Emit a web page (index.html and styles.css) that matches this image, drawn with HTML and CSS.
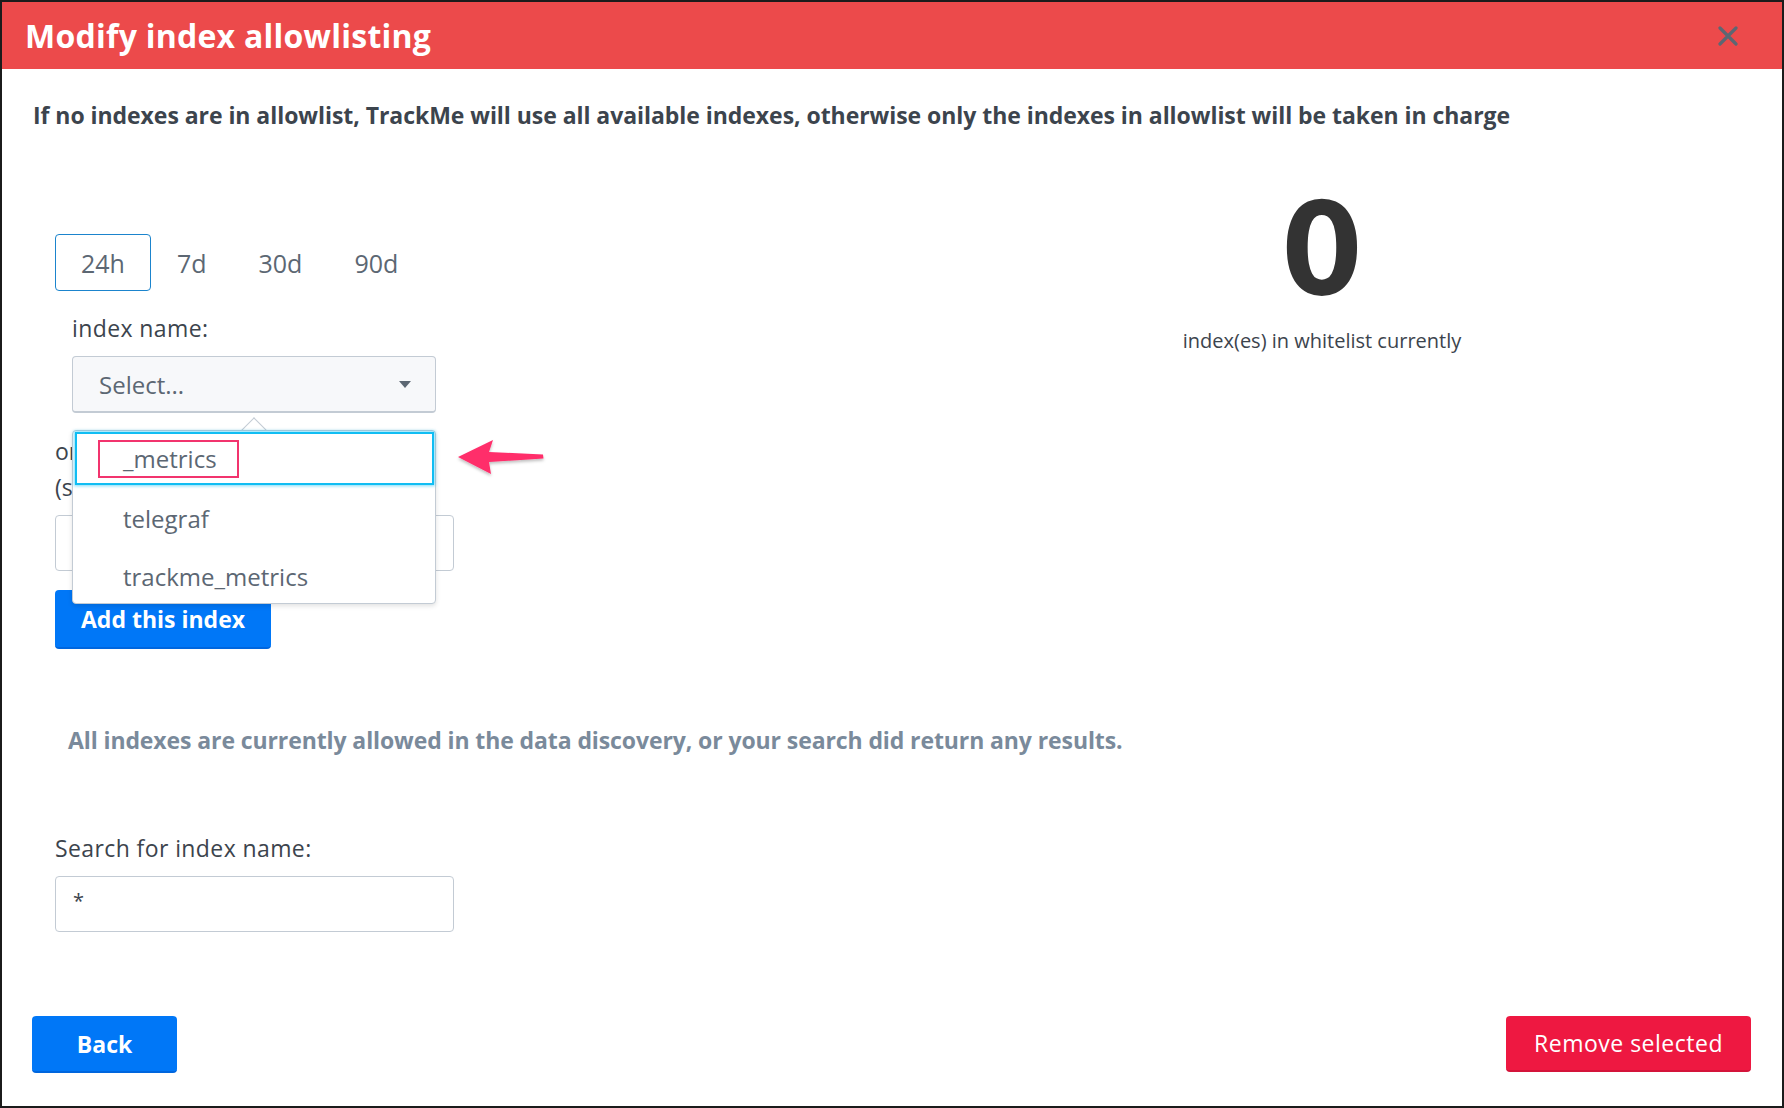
FILE: index.html
```html
<!DOCTYPE html>
<html lang="en">
<head>
<meta charset="utf-8">
<title>Modify index allowlisting</title>
<link rel="stylesheet" href="styles.css">
</head>
<body>
<div class="modal">
  <div class="modal-header">
    <h1 class="title">Modify index allowlisting</h1>
    <button class="close" aria-label="Close">
      <svg width="20" height="20" viewBox="0 0 20 20"><path d="M2 2 L18 18 M18 2 L2 18" stroke="#5C6773" stroke-width="3.2" stroke-linecap="round"/></svg>
    </button>
  </div>
  <div class="modal-body">
    <p class="intro">If no indexes are in allowlist, TrackMe will use all available indexes, otherwise only the indexes in allowlist will be taken in charge</p>
    <div class="columns">
      <div class="col-left">
        <div class="tabs">
          <span class="tab active">24h</span>
          <span class="tab">7d</span>
          <span class="tab">30d</span>
          <span class="tab">90d</span>
        </div>
        <div class="field-indent">
          <div class="label">index name:</div>
          <div class="select-wrap">
            <div class="select"><span>Select...</span><span class="caret"></span></div>
            <div class="popover">
              <div class="popover-arrow"></div>
              <ul class="menu">
                <li class="menu-item focused"><span class="annot-box">_metrics</span></li>
                <li class="menu-item">telegraf</li>
                <li class="menu-item">trackme_metrics</li>
              </ul>
            </div>
          </div>
        </div>
        <div class="manual-label">or enter an index name manually<br>(supports wildcards):</div>
        <div class="text-input"></div>
        <button class="btn btn-primary btn-add">Add this index</button>
      </div>
      <div class="col-right">
        <div class="big-count">0</div>
        <div class="count-label">index(es) in whitelist currently</div>
      </div>
    </div>
    <p class="empty-msg">All indexes are currently allowed in the data discovery, or your search did return any results.</p>
    <div class="label search-label">Search for index name:</div>
    <div class="text-input search-input">*</div>
  </div>
  <div class="modal-footer">
    <button class="btn btn-primary btn-back">Back</button>
    <button class="btn btn-danger">Remove selected</button>
  </div>
  <svg class="annot-arrow" width="100" height="50" viewBox="0 0 100 50">
    <defs>
      <filter id="sh" x="-20%" y="-30%" width="140%" height="160%">
        <feDropShadow dx="0" dy="2" stdDeviation="1.5" flood-color="#000" flood-opacity="0.25"/>
      </filter>
    </defs>
    <path d="M6 25 L41 8 L37 20 L91 22.5 L91.5 26.5 L37 30 L39 42 Z" fill="#FF2D6B" filter="url(#sh)"/>
  </svg>
</div>
</body>
</html>
```

FILE: styles.css
```css
* { box-sizing: border-box; }
html, body { margin: 0; padding: 0; }
body {
  background: #1b1b1b;
  padding: 2px;
  font-family: "Open Sans", Lato, Arial, sans-serif;
  color: #3C444D;
}
.modal {
  position: relative;
  width: 1780px;
  height: 1104px;
  background: #fff;
  display: flex;
  flex-direction: column;
}
.modal-header {
  height: 67px;
  background: #EC4A4B;
  display: flex;
  align-items: center;
  justify-content: space-between;
  padding: 0 44px 0 23px;
}
.title {
  margin: 0;
  color: #fff;
  font-size: 32px;
  font-weight: 700;
  line-height: 40px;
  letter-spacing: 0.25px;
}
.close {
  border: 0;
  background: none;
  padding: 0;
  width: 20px;
  height: 20px;
}
.close svg { display: block; }
.modal-body {
  padding: 0 30px;
  flex: 1;
}
.intro {
  margin: 31px 0 0 1px;
  font-size: 23px;
  font-weight: 700;
  line-height: 30px;
  color: #3C444D;
  letter-spacing: -0.05px;
}
.columns {
  display: grid;
  grid-template-columns: 1fr 1fr;
  margin-top: 50px;
}
.col-left {
  padding: 54px 0 0 23px;
}
.tabs {
  display: flex;
  height: 57px;
}
.tab {
  display: flex;
  align-items: center;
  padding: 0 25px;
  font-size: 25px;
  color: #5C6773;
  border: 1px solid transparent;
  border-radius: 4px;
}
.tab.active {
  border-color: #1B84CD;
}
.field-indent {
  padding-left: 17px;
}
.label {
  margin-top: 22px;
  font-size: 23px;
  line-height: 30px;
  color: #3C444D;
  letter-spacing: 0.4px;
}
.select-wrap {
  position: relative;
  width: 364px;
  margin-top: 13px;
}
.select {
  height: 57px;
  background: #F7F8FA;
  border: 1px solid #C3CBD4;
  border-bottom-width: 2px;
  border-radius: 4px;
  display: flex;
  align-items: center;
  justify-content: space-between;
  padding: 0 24px 0 26px;
  font-size: 24px;
  color: #5C6773;
}
.caret {
  width: 0;
  height: 0;
  border-left: 6px solid transparent;
  border-right: 6px solid transparent;
  border-top: 7px solid #5C6773;
}
.popover {
  position: absolute;
  left: 0;
  top: 74px;
  width: 364px;
  z-index: 5;
}
.popover-arrow {
  position: absolute;
  left: 173px;
  top: -9px;
  width: 18px;
  height: 18px;
  background: #fff;
  border-top: 1px solid #C3CBD4;
  border-left: 1px solid #C3CBD4;
  transform: rotate(45deg);
}
.menu {
  position: relative;
  list-style: none;
  margin: 0;
  padding: 0;
  height: 174px;
  background: #fff;
  border: 1px solid #C3CBD4;
  border-radius: 4px;
  box-shadow: 0 2px 5px rgba(0,0,0,0.12);
}
.menu-item {
  height: 58px;
  display: flex;
  align-items: center;
  padding-left: 50px;
  font-size: 24px;
  color: #5C6773;
}
.menu-item.focused {
  height: 53px;
  margin: 1px 1px 4px 2px;
  border: 2px solid #10BDF3;
  box-shadow: 0 0 3px 1px rgba(16,189,243,0.55);
  padding-left: 21px;
}
.annot-box {
  display: flex;
  align-items: center;
  height: 38px;
  padding: 0 20px 0 23px;
  border: 2px solid #F2346E;
}
.manual-label {
  margin-top: 20px;
  font-size: 23px;
  line-height: 36px;
  color: #3C444D;
  white-space: nowrap;
  overflow: hidden;
  width: 399px;
}
.text-input {
  width: 399px;
  height: 56px;
  margin-top: 10px;
  border: 1px solid #C3CBD4;
  border-radius: 4px;
  background: #fff;
}
.btn {
  border: 0;
  border-radius: 4px;
  font-family: "Open Sans", Lato, Arial, sans-serif;
  font-size: 23px;
  color: #fff;
  cursor: pointer;
}
.btn-primary {
  background: #0077F7;
  border-bottom: 2px solid #0066DE;
  font-weight: 700;
}
.btn-add {
  display: block;
  margin-top: 19px;
  height: 59px;
  width: 216px;
}
.col-right {
  display: flex;
  flex-direction: column;
  align-items: center;
}
.big-count {
  font-family: Lato, "Open Sans", sans-serif;
  font-size: 130px;
  font-weight: 800;
  line-height: 130px;
  color: #333;
}
.count-label {
  margin-top: 16px;
  font-size: 20px;
  line-height: 30px;
  color: #3C444D;
}
.empty-msg {
  margin: 76px 0 0 36px;
  font-size: 23px;
  font-weight: 700;
  line-height: 30px;
  color: #7A8A9B;
  letter-spacing: -0.1px;
}
.search-label {
  margin: 78px 0 0 23px;
}
.search-input {
  margin: 13px 0 0 23px;
  font-size: 20px;
  padding: 10px 0 0 17px;
  color: #3C444D;
  letter-spacing: 0;
}
.modal-footer {
  display: flex;
  justify-content: space-between;
  padding: 0 31px 33px 30px;
}
.btn-back {
  width: 145px;
  height: 57px;
}
.btn-danger {
  width: 245px;
  height: 56px;
  background: #EE1841;
  border-bottom: 2px solid #D4143A;
  font-weight: 400;
  letter-spacing: 0.5px;
}
.annot-arrow {
  position: absolute;
  left: 450px;
  top: 430px;
  z-index: 6;
}
```
